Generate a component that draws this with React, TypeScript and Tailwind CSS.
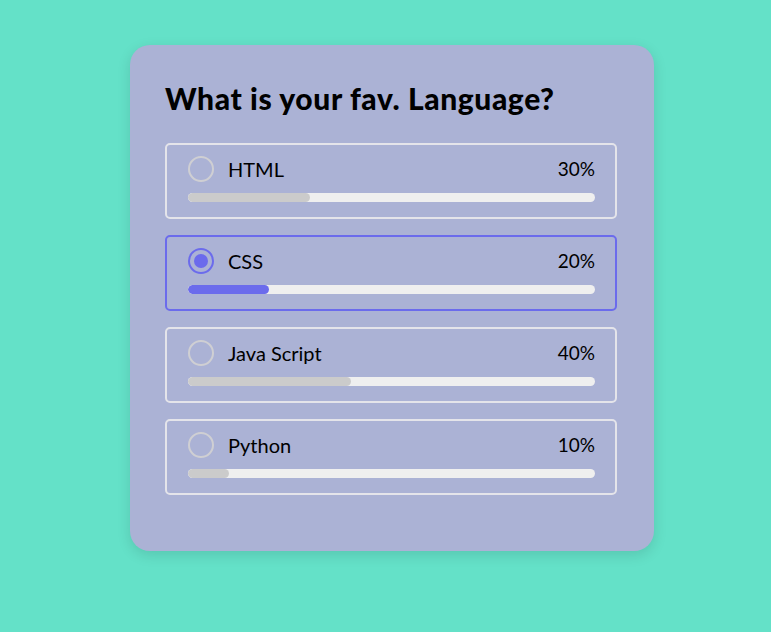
import React from "react";

const options = [
  { label: "HTML", pct: 30, selected: false },
  { label: "CSS", pct: 20, selected: true },
  { label: "Java Script", pct: 40, selected: false },
  { label: "Python", pct: 10, selected: false },
];

export default function App() {
  return (
    <div
      className="min-h-[632px] w-full bg-[#64e1c8] pt-[45px] pl-[130px]"
      style={{ fontFamily: '"Lato", "Open Sans", sans-serif' }}
    >
      <div className="w-[524px] h-[506px] rounded-[20px] bg-[#abb2d5] shadow-[0_4px_14px_rgba(0,0,0,0.12)] px-[35px] pt-[36px]">
        <h1 className="text-[30px] leading-[34px] font-black text-black tracking-[0.6px]">
          What is your fav. Language?
        </h1>
        <div className="mt-[28px] flex flex-col gap-[16px] w-[452px]">
          {options.map((o) => (
            <div
              key={o.label}
              className={`h-[76px] rounded-[5px] border-2 pl-[21px] pr-[20px] pt-[11px] ${
                o.selected ? "border-[#6b6bec]" : "border-[#e4e4ea]"
              }`}
            >
              <div className="flex items-center h-[26px]">
                <div
                  className={`w-[26px] h-[26px] rounded-full border-2 flex items-center justify-center ${
                    o.selected ? "border-[#6b6bec]" : "border-[#cfcfd3]"
                  }`}
                >
                  {o.selected && <div className="w-[14px] h-[14px] rounded-full bg-[#6b6bec]" />}
                </div>
                <span className="ml-[14px] text-[20px] text-black">{o.label}</span>
                <span className="ml-auto text-[19px] text-black">{o.pct}%</span>
              </div>
              <div className="mt-[11px] h-[9px] rounded-full bg-[#efefef] overflow-hidden">
                <div
                  className={`h-full rounded-full ${o.selected ? "bg-[#6b6bec]" : "bg-[#cbcbcb]"}`}
                  style={{ width: `${o.pct}%` }}
                />
              </div>
            </div>
          ))}
        </div>
      </div>
    </div>
  );
}
